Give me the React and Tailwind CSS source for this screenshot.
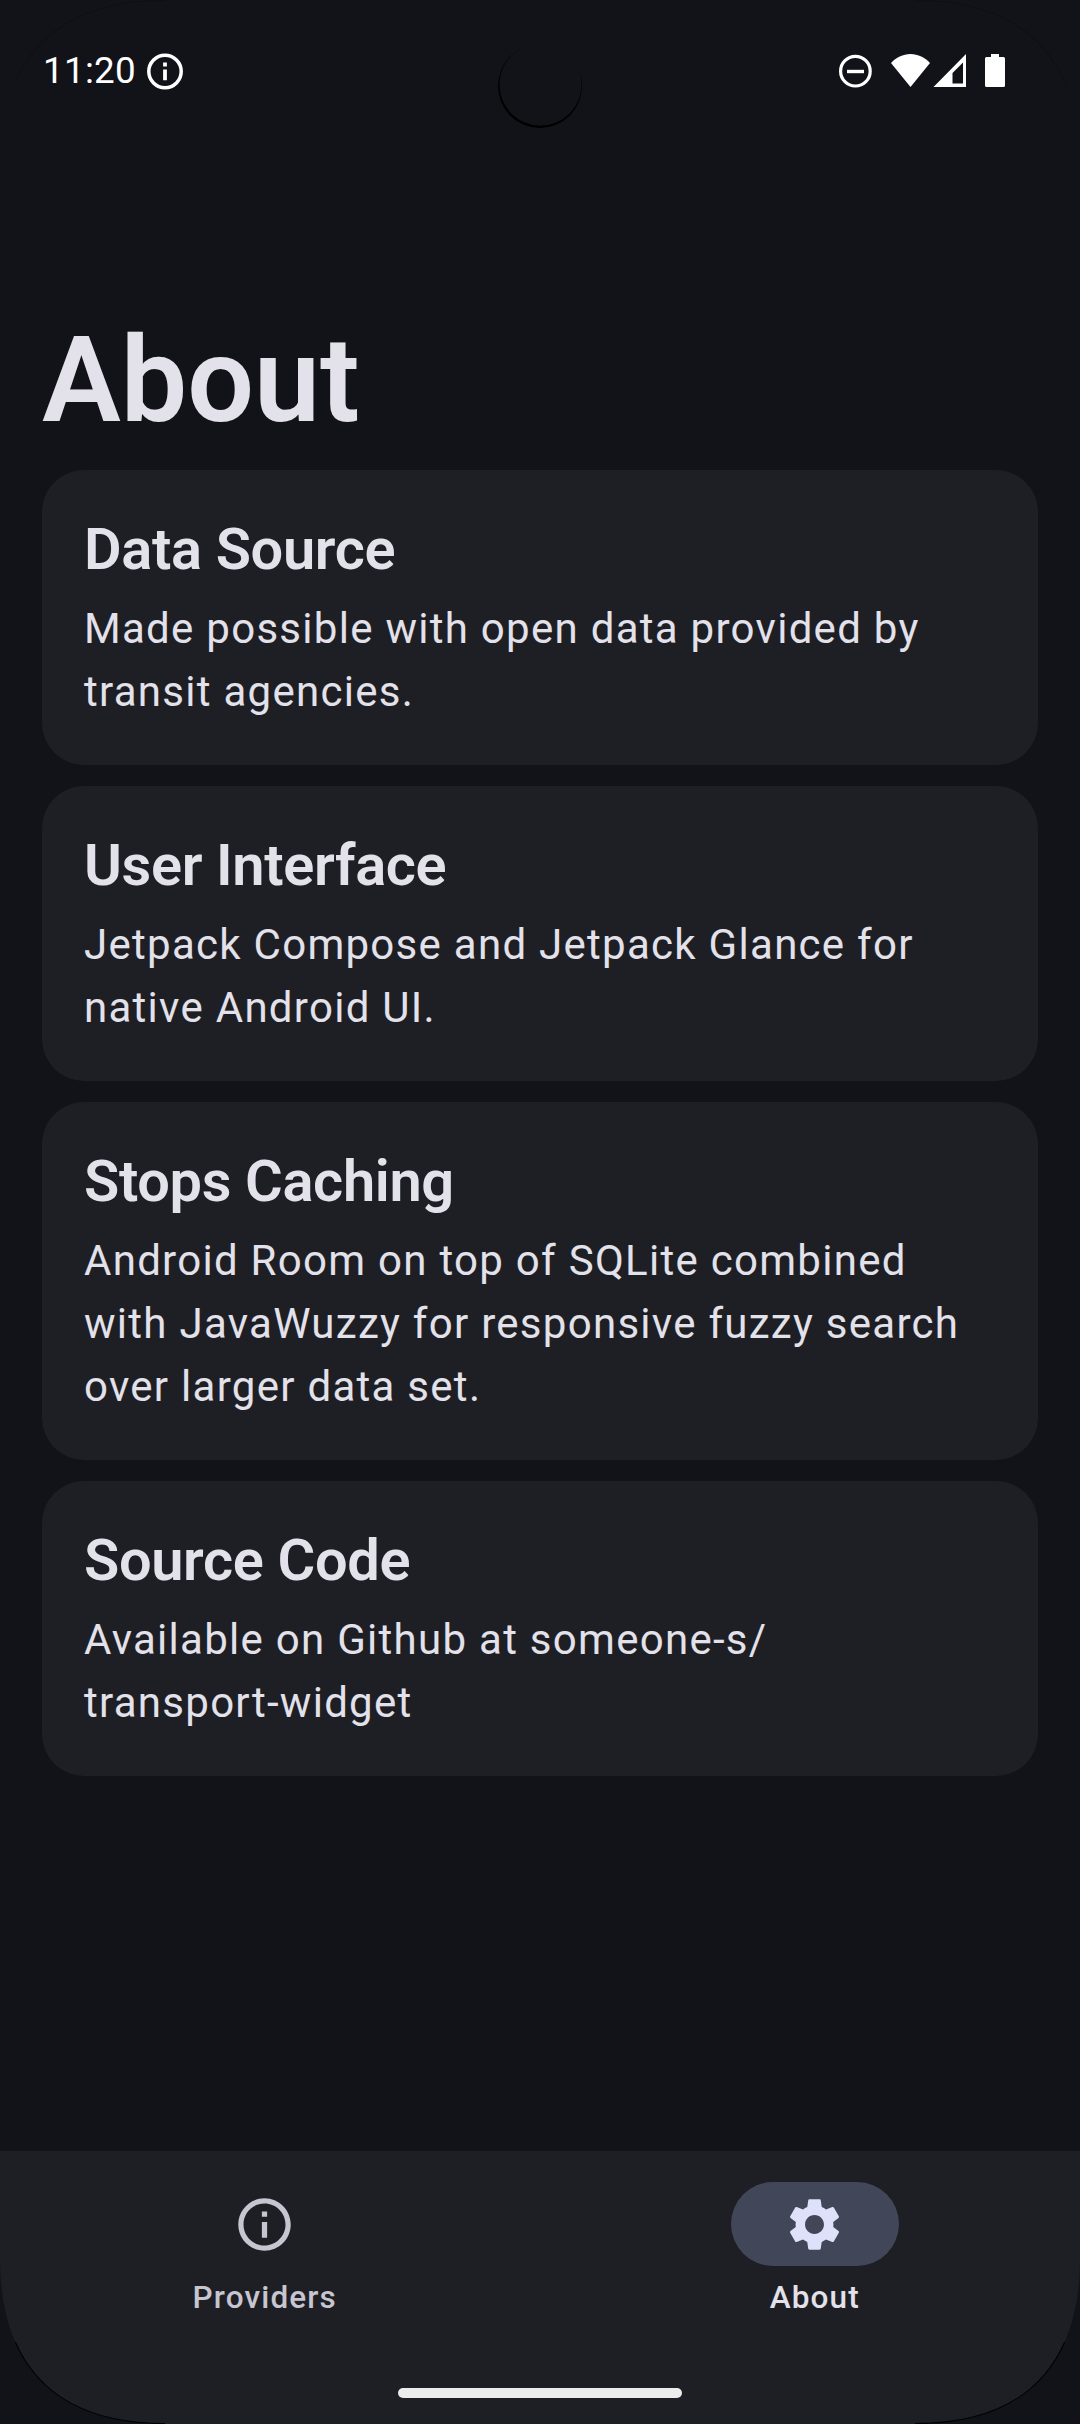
const sections = [
  { title: "Data Source", lines: ["Made possible with open data provided by", "transit agencies."] },
  { title: "User Interface", lines: ["Jetpack Compose and Jetpack Glance for", "native Android UI."] },
  {
    title: "Stops Caching",
    lines: ["Android Room on top of SQLite combined", "with JavaWuzzy for responsive fuzzy search", "over larger data set."],
  },
  { title: "Source Code", lines: ["Available on Github at someone-s/", "transport-widget"] },
];

function InfoIcon({ className }) {
  return (
    <svg viewBox="0 0 24 24" fill="currentColor" className={className}>
      <path d="M11 7h2v2h-2zm0 4h2v6h-2zm1-9C6.48 2 2 6.48 2 12s4.48 10 10 10 10-4.48 10-10S17.52 2 12 2zm0 18c-4.41 0-8-3.59-8-8s3.59-8 8-8 8 3.59 8 8-3.59 8-8 8z" />
    </svg>
  );
}

function GearIcon({ className }) {
  return (
    <svg viewBox="0 0 24 24" fill="currentColor" className={className}>
      <path d="M19.14 12.94c.04-.3.06-.61.06-.94 0-.32-.02-.64-.07-.94l2.03-1.58c.18-.14.23-.41.12-.61l-1.92-3.32c-.12-.22-.37-.29-.59-.22l-2.39.96c-.5-.38-1.03-.7-1.62-.94l-.36-2.54c-.04-.24-.24-.41-.48-.41h-3.84c-.24 0-.43.17-.47.41l-.36 2.54c-.59.24-1.13.57-1.62.94l-2.39-.96c-.22-.08-.47 0-.59.22L2.74 8.87c-.12.21-.08.47.12.61l2.03 1.58c-.05.3-.09.63-.09.94s.02.64.07.94l-2.03 1.58c-.18.14-.23.41-.12.61l1.92 3.32c.12.22.37.29.59.22l2.39-.96c.5.38 1.03.7 1.62.94l.36 2.54c.05.24.24.41.48.41h3.84c.24 0 .44-.17.47-.41l.36-2.54c.59-.24 1.13-.56 1.62-.94l2.39.96c.22.08.47 0 .59-.22l1.92-3.32c.12-.22.07-.47-.12-.61l-2.01-1.58zM12 15.6c-1.98 0-3.6-1.62-3.6-3.6s1.62-3.6 3.6-3.6 3.6 1.62 3.6 3.6-1.62 3.6-3.6 3.6z" />
    </svg>
  );
}

/* Display corner, drawn for the top left and flipped for the others. */
function Corner({ className, strokeClass }) {
  return (
    <svg viewBox="0 0 168 168" className={`pointer-events-none absolute size-[168px] ${className}`}>
      <path d="M0 0V165C0 57.5 57.5 0 165 0Z" fill="#121318" />
      <path d="M15.3 82C39 28.2 89.75 0.4 165 0.4" fill="none" stroke="#000" className={strokeClass} />
    </svg>
  );
}

function StatusBar() {
  return (
    <header className="flex h-[143px] items-start justify-between pt-[51px] pr-[75px] pl-[43px] text-white">
      <div className="flex items-center">
        <span className="-mt-[2px] w-[101px] text-[36.75px] leading-[41px] tracking-[0.3px]">11:20</span>
        <svg viewBox="0 0 42 41" className="h-[41px] w-[42px]" fill="none" stroke="currentColor">
          <circle cx="21" cy="20.5" r="16.2" strokeWidth="3.5" />
          <path d="M21 11.6V15.4M21 18.6V29.3" strokeWidth="3.8" />
        </svg>
      </div>
      <svg viewBox="838 51 167 41" className="h-[41px] w-[167px]" fill="currentColor">
        <circle cx="855.4" cy="71.2" r="14.8" fill="none" stroke="currentColor" strokeWidth="3.2" />
        <rect x="847" y="69.8" width="17" height="3.4" />
        <path d="M910.5 87L891 63C896 57.5 903 54 910.5 54S925 57.5 930 63Z" />
        <path fillRule="evenodd" d="M966 54V87H933.5ZM963 62.5L952.5 73V83.5H963Z" />
        <path d="M991 54H999V57H1003.5Q1005 57 1005 58.5V85.5Q1005 87 1003.5 87H986.5Q985 87 985 85.5V58.5Q985 57 986.5 57H991Z" />
      </svg>
    </header>
  );
}

function SectionCard({ title, lines }) {
  return (
    <section className="rounded-[42px] bg-[#1e1f25] p-[42px]">
      <h2 className="text-[57.75px] leading-[74px] font-semibold tracking-[-0.35px]">{title}</h2>
      <p className="mt-[11px] text-[42px] leading-[63px] tracking-[1.28px]">
        {lines.map((line) => (
          <span key={line} className="block whitespace-nowrap">
            {line}
          </span>
        ))}
      </p>
    </section>
  );
}

export default function App() {
  return (
    <div className="relative flex h-[2424px] w-[1080px] flex-col overflow-hidden bg-[#121318] font-['Roboto',sans-serif] text-[#e3e1e9]">
      <StatusBar />

      {/* Camera cut-out */}
      <svg viewBox="0 0 100 100" className="absolute top-[36px] left-[490px] size-[100px]">
        <circle cx="50" cy="50" r="42" fill="#000" />
        <circle cx="50.5" cy="48.6" r="41.1" fill="#121318" />
        <path d="M30 0H92V34H84L62 12L30 14Z" fill="#121318" />
      </svg>

      <main className="flex flex-1 flex-col px-[42px] pt-[169px]">
        <h1 className="text-[118.125px] leading-[137px] font-semibold">About</h1>
        <div className="mt-[21px] flex flex-col gap-[21px]">
          {sections.map((section) => (
            <SectionCard key={section.title} {...section} />
          ))}
        </div>
      </main>

      <nav className="flex h-[273px] gap-[21px] bg-[#1e1f25] pt-[31px] text-[31.5px] leading-[42px] font-medium tracking-[1.15px]">
        <button className="flex flex-1 flex-col items-center text-[#c6c5d0]">
          <span className="flex h-[84px] w-[168px] items-center justify-center">
            <InfoIcon className="size-[63px]" />
          </span>
          <span className="mt-[11px]">Providers</span>
        </button>
        <button className="flex flex-1 flex-col items-center">
          <span className="flex h-[84px] w-[168px] items-center justify-center rounded-full bg-[#424659] pr-px text-[#dee1f9]">
            <GearIcon className="size-[63px]" />
          </span>
          <span className="mt-[11px] pr-px">About</span>
        </button>
      </nav>

      <div className="absolute bottom-[26px] left-[398px] h-[10px] w-[284px] rounded-full bg-[#ececec]" />

      <Corner className="top-0 left-0" strokeClass="opacity-35 [stroke-width:0.5]" />
      <Corner className="top-0 right-0 -scale-x-100" strokeClass="opacity-35 [stroke-width:0.5]" />
      <Corner className="bottom-0 left-0 -scale-y-100" strokeClass="[stroke-width:1.1]" />
      <Corner className="right-0 bottom-0 -scale-100" strokeClass="[stroke-width:1.1]" />
    </div>
  );
}
